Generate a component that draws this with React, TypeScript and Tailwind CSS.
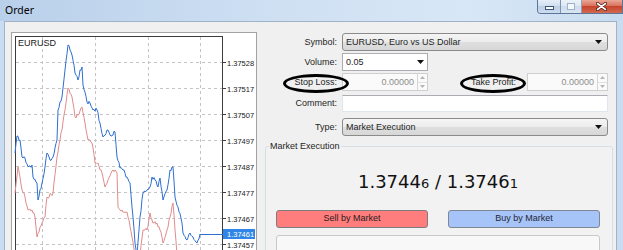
import React from "react";

const BLUE: [number, number][] = [
  [15, 153], [17, 136], [20, 140], [22, 157], [25, 158], [28, 167], [32, 165], [33, 177], [37, 183], [38, 200],
  [42, 183], [45, 167], [47, 153], [50, 160], [53, 157], [57, 140], [58, 110], [62, 97], [65, 70], [68, 45],
  [70, 50], [72, 55], [75, 73], [78, 80], [80, 70], [82, 67], [83, 85], [87, 102], [90, 103], [93, 110],
  [97, 110], [100, 123], [103, 137], [107, 130], [110, 135], [115, 132], [117, 157], [120, 168], [123, 170],
  [127, 177], [130, 183], [133, 217], [135, 243], [137, 254], [140, 217], [143, 193], [147, 190], [150, 187],
  [152, 177], [155, 180], [158, 187], [160, 178], [163, 200], [167, 190], [170, 170], [173, 167], [175, 197],
  [178, 207], [182, 223], [183, 233], [187, 240], [190, 233], [193, 237], [197, 243], [200, 234],
];

const RED: [number, number][] = [
  [15, 193], [18, 167], [22, 190], [25, 197], [28, 210], [32, 210], [35, 217], [37, 237], [42, 223], [45, 217],
  [47, 197], [53, 193], [57, 157], [60, 140], [65, 110], [68, 88], [72, 97], [75, 117], [78, 115], [82, 107],
  [85, 123], [88, 140], [92, 143], [95, 163], [98, 163], [102, 173], [105, 187], [108, 180], [113, 170],
  [117, 173], [118, 207], [122, 210], [127, 212], [132, 237], [135, 256], [140, 256], [143, 230], [147, 230],
  [150, 213], [153, 223], [157, 223], [160, 230], [163, 243], [167, 230], [170, 217], [173, 203], [175, 230],
  [177, 256],
];

const LEVELS = ["1.37528", "1.37517", "1.37507", "1.37497", "1.37487", "1.37477", "1.37467", "1.37457"];

// little noise so the ticks look like real quotes
function jagged(points: [number, number][], seed: number) {
  let s = seed;
  const rnd = () => {
    s = (s * 9301 + 49297) % 233280;
    return s / 233280;
  };
  const out: string[] = [];
  for (let i = 0; i < points.length - 1; i++) {
    const [x0, y0] = points[i];
    const [x1, y1] = points[i + 1];
    const steps = Math.max(1, Math.round(x1 - x0));
    for (let k = 0; k < steps; k++) {
      const t = k / steps;
      let y = y0 + (y1 - y0) * t;
      if (k > 0) y += (rnd() - 0.5) * 4;
      out.push(`${(x0 + (x1 - x0) * t).toFixed(1)},${y.toFixed(1)}`);
    }
  }
  const last = points[points.length - 1];
  out.push(`${last[0]},${last[1]}`);
  return out.join(" ");
}

function Arrow() {
  return (
    <svg width="7" height="4" viewBox="0 0 7 4">
      <path d="M0 0h7L3.5 4z" fill="#111" />
    </svg>
  );
}

function CaptionButtons() {
  return (
    <div className="ml-auto flex h-[14px] self-start overflow-hidden rounded-bl-[4px] border border-t-0 border-[#5b7698]">
      <div className="flex w-[23px] items-end justify-center border-r border-[#7b93b2] bg-[linear-gradient(#e6eef8,#d0deef_50%,#bccfe6_50%,#cddcf0)] pb-[3px]">
        <svg width="9" height="4" viewBox="0 0 9 4">
          <rect x="0.5" y="0.5" width="8" height="3" fill="#fff" stroke="#3a5575" />
        </svg>
      </div>
      <div className="flex w-[21px] items-center justify-center border-r border-[#8aa0bc] bg-[linear-gradient(#edf2f9,#dde7f3_50%,#cfdcec_50%,#dae5f2)]">
        <svg width="8" height="7" viewBox="0 0 8 7">
          <rect x="0.5" y="0.5" width="7" height="6" fill="#f4f7fb" stroke="#9fb2c9" />
        </svg>
      </div>
      <div className="flex w-[40px] items-center justify-start bg-[linear-gradient(#eaa795,#d9735e_45%,#c6442c_50%,#d26a50)] pl-[14px]">
        <svg width="11" height="9" viewBox="0 0 11 9">
          <path d="M1.5 1.5l8 6M9.5 1.5l-8 6" stroke="#4a1a10" strokeWidth="3.2" strokeLinecap="round" />
          <path d="M1.5 1.5l8 6M9.5 1.5l-8 6" stroke="#fff" strokeWidth="1.6" strokeLinecap="round" />
        </svg>
      </div>
    </div>
  );
}

function Chart() {
  return (
    <div className="ml-[6px] mt-[10px] h-[230px] w-[246px] shrink-0 border border-[#a3a3a3] bg-white">
      <svg width="244" height="228" viewBox="12 33 244 228" fontFamily="'Liberation Sans', Arial, sans-serif">
        <rect x="15.5" y="36.5" width="207" height="240" fill="#fff" stroke="#3c3c3c" />
        {[62, 88, 114, 140, 166, 192, 218, 244].map((y) => (
          <line key={y} x1="16" x2="222" y1={y + 0.5} y2={y + 0.5} stroke="#c4c4c4" strokeDasharray="3 3" />
        ))}
        {[42, 95, 148, 200].map((x) => (
          <line key={x} x1={x + 0.5} x2={x + 0.5} y1="37" y2="260" stroke="#c4c4c4" strokeDasharray="3 3" />
        ))}
        <text x="18" y="45.5" fontSize="9" fill="#1a1a1a">EURUSD</text>
        <polyline points={jagged(RED, 7)} fill="none" stroke="#e08c8c" strokeWidth="1" />
        <polyline points={jagged(BLUE, 3)} fill="none" stroke="#2e6fd0" strokeWidth="1" />
        <line x1="200" x2="223" y1="234.5" y2="234.5" stroke="#2e6fd0" />
        {LEVELS.map((l, i) => (
          <g key={l}>
            <line x1="222" x2="226" y1={62.5 + i * 26} y2={62.5 + i * 26} stroke="#3c3c3c" />
            <text x="227" y={65.5 + i * 26} fontSize="7.5" fill="#1a1a1a">{l}</text>
          </g>
        ))}
        <rect x="223" y="229" width="32" height="10" fill="#2f86e6" />
        <text x="227" y="237" fontSize="7.5" fill="#fff">1.37461</text>
      </svg>
    </div>
  );
}

function Spinner() {
  return (
    <div className="flex h-full w-[10px] flex-col border-l border-[#d6d6d6]">
      <div className="flex flex-1 items-center justify-center border-b border-[#e0e0e0]">
        <svg width="5" height="3" viewBox="0 0 5 3"><path d="M0 3h5L2.5 0z" fill="#b5b5b5" /></svg>
      </div>
      <div className="flex flex-1 items-center justify-center">
        <svg width="5" height="3" viewBox="0 0 5 3"><path d="M0 0h5L2.5 3z" fill="#b5b5b5" /></svg>
      </div>
    </div>
  );
}

function Circled({ children, className }: { children: React.ReactNode; className: string }) {
  return (
    <span className="relative inline-block">
      {children}
      <span className={`absolute z-10 rounded-[50%] border-[3px] border-black ${className}`} />
    </span>
  );
}

export default function App() {
  const combo =
    "flex h-[18px] items-center justify-between rounded-[3px] border border-[#8b8b8b] bg-[linear-gradient(#f5f5f5,#ececec_50%,#dfdfdf_50%,#d7d7d7)] pl-[3px] pr-[5px]";
  const label = "flex items-center justify-end pr-[5px]";

  return (
    <div className="flex h-[250px] w-[623px] flex-col overflow-hidden bg-[#c9dcf1] font-['Liberation_Sans',Arial,sans-serif] text-[9px] text-[#1e1e1e]">
      {/* title bar */}
      <div className="flex h-[21px] shrink-0 bg-[linear-gradient(90deg,#b9d0ea,#cfe0f3_45%,#d8e7f6_75%,#c7dbf0)]">
        <span className="pl-[5px] pt-[3px] font-['Noto_Sans',sans-serif] text-[10.5px] leading-[14px] text-black">Order</span>
        <CaptionButtons />
      </div>

      <div className="flex flex-1">
        <div className="w-[4px] shrink-0" />
        <div className="flex w-[613px] shrink-0 border border-b-0 border-[#9fb2c8] bg-[#f0f0f0]">
          <Chart />

          {/* order form */}
          <div className="flex w-[358px] flex-col pr-[7px] pt-[11px]">
            <div className="grid grid-cols-[85px_266px] leading-[11px]">
              <div className={label}>Symbol:</div>
              <div className={combo}>
                <span>EURUSD, Euro vs US Dollar</span>
                <Arrow />
              </div>

              <div className={`${label} mt-[2px]`}>Volume:</div>
              <div className="mt-[2px] flex">
                <div className="flex h-[18px] w-[86px] items-center justify-between border border-[#abadb3] bg-white pl-[3px] pr-[3px]">
                  <span>0.05</span>
                  <Arrow />
                </div>
              </div>

              <div className={`${label} mt-[2px]`}>
                <Circled className="-bottom-[5px] -left-[11px] -right-[12px] -top-[3px]">Stop Loss:</Circled>
              </div>
              <div className="mt-[2px] flex h-[18px]">
                <div className="flex w-[86px] items-center border border-[#cfcfcf] bg-[#fafafa]">
                  <span className="flex-1 pr-[3px] text-right text-[#8d8d8d]">0.00000</span>
                  <Spinner />
                </div>
                <div className="flex flex-1 items-center justify-end pr-[11px]">
                  <Circled className="-bottom-[5px] -left-[11px] -right-[10px] -top-[3px]">Take Profit:</Circled>
                </div>
                <div className="flex w-[81px] items-center border border-[#cfcfcf] bg-[#fafafa]">
                  <span className="flex-1 pr-[3px] text-right text-[#8d8d8d]">0.00000</span>
                  <Spinner />
                </div>
              </div>

              <div className={`${label} mt-[4px]`}>Comment:</div>
              <div className="mt-[4px] h-[17px] border border-[#e0e6ee] border-t-[#abadb3] bg-white" />

              <div className={`${label} mt-[6px]`}>Type:</div>
              <div className={`${combo} mt-[6px]`}>
                <span>Market Execution</span>
                <Arrow />
              </div>
            </div>

            <fieldset className="ml-[8px] mt-[5px] w-[348px] rounded-[3px] border border-[#d5dfe5] bg-[#f2f2f2]">
              <legend className="ml-[3px] px-[1px] leading-[10px]">Market Execution</legend>
              <div className="pb-[10px] pl-[10px] pr-[12px]">
                <div className="mt-[20px] text-center font-['DejaVu_Sans',Verdana,sans-serif] text-[18px] leading-[22px] text-[#111]">
                  1.3744<span className="text-[13px]">6</span> / 1.3746<span className="text-[13px]">1</span>
                </div>
                <div className="mt-[15px] flex justify-between">
                  <div className="flex h-[18px] w-[152px] items-center justify-center rounded-[3px] border border-[#7d7d7d] bg-[#ff7d7d] text-[#2b1c1c]">
                    Sell by Market
                  </div>
                  <div className="flex h-[18px] w-[152px] items-center justify-center rounded-[3px] border border-[#7f8796] bg-[#a6c4f7] text-[#1f2636]">
                    Buy by Market
                  </div>
                </div>
                <div className="mt-[7px] h-[18px] w-[324px] rounded-[3px] border border-[#c9c9c9] bg-[#f8f8f8]" />
              </div>
            </fieldset>
          </div>
        </div>
      </div>
    </div>
  );
}
